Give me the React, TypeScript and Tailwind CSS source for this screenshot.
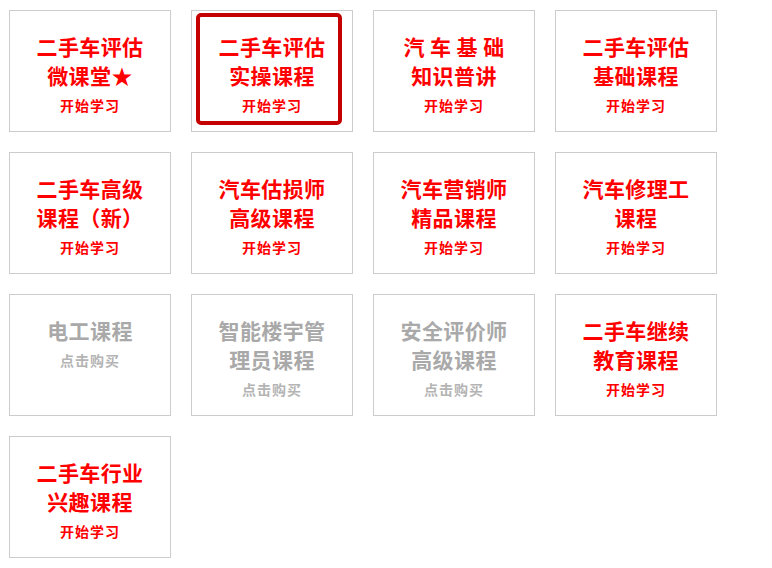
import React from 'react'

type Course = {
  lines: string[]
  action: string
  locked?: boolean
  active?: boolean
}

const courses: Course[] = [
  { lines: ['二手车评估', '微课堂★'], action: '开始学习' },
  { lines: ['二手车评估', '实操课程'], action: '开始学习', active: true },
  { lines: ['汽 车 基 础', '知识普讲'], action: '开始学习' },
  { lines: ['二手车评估', '基础课程'], action: '开始学习' },
  { lines: ['二手车高级', '课程（新）'], action: '开始学习' },
  { lines: ['汽车估损师', '高级课程'], action: '开始学习' },
  { lines: ['汽车营销师', '精品课程'], action: '开始学习' },
  { lines: ['汽车修理工', '课程'], action: '开始学习' },
  { lines: ['电工课程'], action: '点击购买', locked: true },
  { lines: ['智能楼宇管', '理员课程'], action: '点击购买', locked: true },
  { lines: ['安全评价师', '高级课程'], action: '点击购买', locked: true },
  { lines: ['二手车继续', '教育课程'], action: '开始学习' },
  { lines: ['二手车行业', '兴趣课程'], action: '开始学习' }
]

function CourseCard({ course }: { course: Course }) {
  const color = course.locked ? 'text-[#a9a9a9]' : 'text-[#ff0000]'
  return (
    <div className="relative h-[122px] w-[162px] border border-[#cccccc] bg-white pt-[21px] text-center cursor-pointer">
      {course.lines.map((line) => (
        <div
          key={line}
          className={`text-[21px] font-bold leading-[29px] tracking-[0.4px] whitespace-pre ${color}`}
        >
          {line}
        </div>
      ))}
      <div
        className={`mt-[4px] text-[14px] font-bold leading-[22px] tracking-[1px] ${
          course.locked ? 'text-[#b4b4b4]' : 'text-[#ff0000]'
        }`}
      >
        {course.action}
      </div>
      {course.active && (
        <div className="absolute left-[4px] top-[2px] h-[112px] w-[146px] rounded-[5px] border-[4px] border-[#c40000]" />
      )}
    </div>
  )
}

export default function App() {
  return (
    <div
      className="min-h-[568px] w-[772px] bg-white pl-[9px] pt-[10px]"
      style={{ fontFamily: '"Noto Sans CJK SC", "Noto Sans", sans-serif' }}
    >
      <div className="grid grid-cols-[repeat(4,162px)] gap-[20px]">
        {courses.map((c, i) => (
          <CourseCard key={i} course={c} />
        ))}
      </div>
    </div>
  )
}
